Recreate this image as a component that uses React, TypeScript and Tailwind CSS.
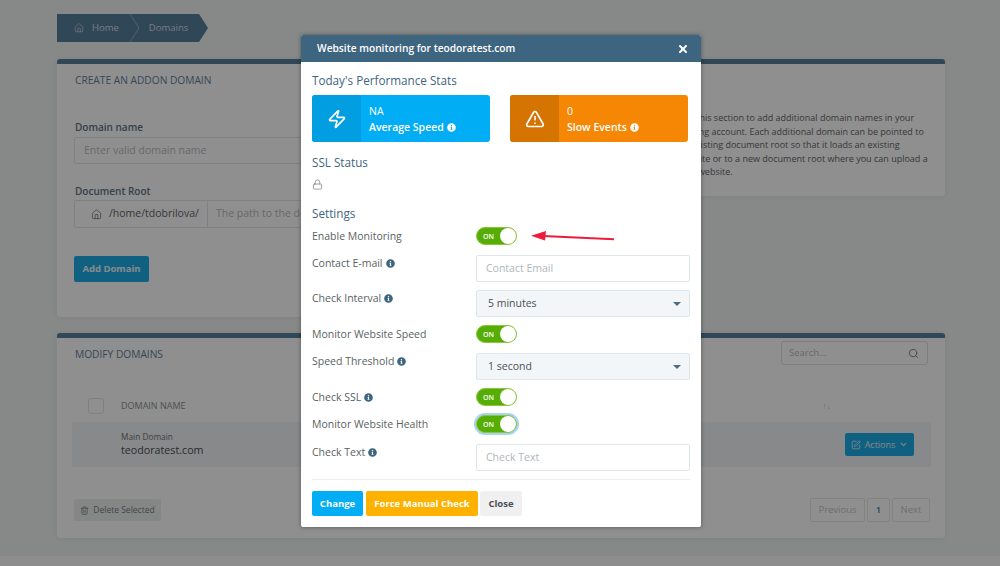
import { AlertTriangle, ChevronDown, House, Lock, Search, SquarePen, Trash2, X, Zap } from 'lucide-react';
import { FaInfoCircle } from 'react-icons/fa';
import type { ReactNode } from 'react';

function Tip({ light }: { light?: boolean }) {
  return (
    <FaInfoCircle
      size={9}
      className={`ml-[3px] inline-block align-[-0.5px] ${light ? 'text-white' : 'text-[#3e6580]'}`}
    />
  );
}

function Toggle({ focused }: { focused?: boolean }) {
  return (
    <div
      className={`flex h-[18px] w-[41px] items-center justify-between rounded-full border border-[#8cc63f] bg-[#56ad03] pl-[6px] ${focused ? 'ring-2 ring-[#a9d3f5]' : ''}`}
    >
      <span className="text-[7px] font-semibold leading-none text-white">ON</span>
      <span className="h-4 w-4 rounded-full bg-white" />
    </div>
  );
}

function TextField({ placeholder }: { placeholder: string }) {
  return (
    <div className="flex h-[27px] w-[214px] items-center rounded-[2px] border border-[#dfe6ec] bg-white px-[9px] pt-px text-[10.5px] text-[#b0b6bc]">
      {placeholder}
    </div>
  );
}

function SelectField({ value }: { value: string }) {
  return (
    <div className="flex h-[27px] w-[214px] items-center justify-between rounded-[2px] border border-[#dfe6ec] bg-[#f3f6f8] pl-[11px] pr-[8px] pt-px text-[10.5px] text-[#4a4f55]">
      {value}
      <span className="h-0 w-0 border-x-[4px] border-t-[4px] border-x-transparent border-t-[#4e6b80]" />
    </div>
  );
}

function Row({ label, tip, className, labelClass, children }: { label: string; tip?: boolean; className: string; labelClass?: string; children: ReactNode }) {
  return (
    <div className={`flex ${className}`}>
      <div className={`w-[164px] text-[10.5px] text-[#5b5f63] ${labelClass ?? 'leading-[18px]'}`}>
        {label}
        {tip && <Tip />}
      </div>
      {children}
    </div>
  );
}

function StatCard({ value, label, bg, iconBg, icon }: { value: string; label: string; bg: string; iconBg: string; icon: ReactNode }) {
  return (
    <div className={`flex h-[47px] w-[178px] overflow-hidden rounded-[3px] text-white ${bg}`}>
      <div className={`flex w-[49px] items-center justify-center ${iconBg}`}>{icon}</div>
      <div className="pl-[8px] pt-[8px] text-[10.5px] leading-4">
        <div>{value}</div>
        <div className="font-semibold">
          {label}
          <Tip light />
        </div>
      </div>
    </div>
  );
}

function Modal() {
  return (
    <div className="absolute left-[301px] top-[35px] h-[492px] w-[400px] overflow-hidden rounded-[2px] bg-white shadow-[0_0_4px_rgba(0,0,0,0.4)]">
      <div className="flex h-[27px] items-center justify-between bg-[#3e6580] pl-[16px] pr-[12px] text-[10.2px] font-semibold text-white">
        Website monitoring for teodoratest.com
        <X size={12} strokeWidth={4} />
      </div>
      <div className="px-[11px]">
        <div className="mt-[9px] text-[11.7px] font-medium leading-[18px] text-[#3e6580]">Today's Performance Stats</div>
        <div className="mt-[6px] flex w-[376px] justify-between">
          <StatCard
            value="NA"
            label="Average Speed"
            bg="bg-[#01adf5]"
            iconBg="bg-[#019fe1]"
            icon={<Zap size={20} strokeWidth={2} />}
          />
          <StatCard
            value="0"
            label="Slow Events"
            bg="bg-[#f58705]"
            iconBg="bg-[#d67402]"
            icon={<AlertTriangle size={20} strokeWidth={2} />}
          />
        </div>
        <div className="mt-[11px] text-[11.7px] font-medium leading-[18px] text-[#3e6580]">SSL Status</div>
        <Lock size={11} strokeWidth={1.5} className="mt-[8px] text-[#777]" />
        <div className="mt-[14px] text-[11.7px] font-medium leading-[18px] text-[#3e6580]">Settings</div>
        <Row label="Enable Monitoring" className="mt-[5px]">
          <Toggle />
        </Row>
        <Row label="Contact E-mail" tip labelClass="leading-4" className="mt-[10px]">
          <TextField placeholder="Contact Email" />
        </Row>
        <Row label="Check Interval" tip labelClass="leading-4" className="mt-[8px]">
          <SelectField value="5 minutes" />
        </Row>
        <Row label="Monitor Website Speed" className="mt-[8px]">
          <Toggle />
        </Row>
        <Row label="Speed Threshold" tip labelClass="leading-4" className="mt-[10px]">
          <SelectField value="1 second" />
        </Row>
        <Row label="Check SSL" tip className="mt-[8px]">
          <Toggle />
        </Row>
        <Row label="Monitor Website Health" className="mt-[9px]">
          <Toggle focused />
        </Row>
        <Row label="Check Text" tip labelClass="leading-4" className="mt-[11px]">
          <TextField placeholder="Check Text" />
        </Row>
        <div className="mt-[8px] h-px w-[378px] bg-[#eef0f2]" />
        <div className="mt-[11px] flex gap-[3px] text-[9.5px] font-bold">
          <div className="flex h-[25px] w-[51px] items-center justify-center rounded-[2px] bg-[#01adf5] pt-px text-white">Change</div>
          <div className="flex h-[25px] w-[112px] items-center justify-center rounded-[2px] bg-[#ffb100] pt-px text-white">Force Manual Check</div>
          <div className="ml-[-1px] flex h-[25px] w-[42px] items-center justify-center rounded-[2px] bg-[#f0f0f0] pt-px text-[#4a4f55]">Close</div>
        </div>
      </div>
    </div>
  );
}

function Breadcrumb() {
  return (
    <div className="flex h-[28px] w-[151px] items-center bg-[#567f9e] pl-[17px] text-[9.5px] text-[#d5dde3] [clip-path:polygon(0_0,142px_0,151px_50%,142px_100%,0_100%)]">
      <House size={10} strokeWidth={1.5} />
      <span className="ml-[8px]">Home</span>
      <svg width="10" height="28" viewBox="0 0 10 28" className="ml-[11px] text-[#9ab]" fill="none" stroke="currentColor">
        <path d="M0 0l9 14-9 14" />
      </svg>
      <span className="ml-[9px]">Domains</span>
    </div>
  );
}

export default function App() {
  return (
    <div className="relative h-[566px] w-[1000px] overflow-hidden bg-[#f1f3f3] font-['Open_Sans',sans-serif]">
      <div className="pl-[57px] pt-[14px]">
        <Breadcrumb />

        <div className="mt-[17px] flex w-[888px] items-start justify-between">
          <section className="h-[258px] w-[590px] overflow-hidden rounded-[3px] border-t-[5px] border-[#567f9e] bg-white px-[17px] pt-[8px] shadow-[0_0_6px_rgba(0,0,0,0.08)]">
            <h2 className="ml-px text-[10.2px] font-medium leading-[16px] text-[#5f7f9c]">CREATE AN ADDON DOMAIN</h2>
            <div className="ml-px mt-[31px] text-[10px] font-semibold leading-4 text-[#5f7488]">Domain name</div>
            <div className="mt-[2px] flex h-[27px] items-center rounded-[2px] border border-[#e2e6e8] pl-[9px] text-[10.5px] text-[#b8bcbf]">
              Enter valid domain name
            </div>
            <div className="ml-px mt-[19px] text-[10px] font-semibold leading-4 text-[#5f7488]">Document Root</div>
            <div className="mt-px flex h-[28px] items-center rounded-[2px] border border-[#e2e6e8] text-[10.5px]">
              <div className="flex h-full w-[133px] items-center border-r border-[#e2e6e8] pl-[16px] text-[#5f6468]">
                <House size={11} strokeWidth={1.5} />
                <span className="ml-[7px]">/home/tdobrilova/</span>
              </div>
              <span className="pl-[8px] text-[#b8bcbf]">The path to the document root</span>
            </div>
            <div className="mt-[28px] flex h-[26px] w-[75px] items-center justify-center rounded-[2px] bg-[#1eaee6] text-[9.5px] font-bold text-[#f0f6fa]">
              Add Domain
            </div>
          </section>

          <section className="h-[137px] w-[285px] overflow-hidden rounded-[3px] border-t-[5px] border-[#567f9e] bg-white pl-[18px] pr-[17px] pt-[47px] shadow-[0_0_6px_rgba(0,0,0,0.08)]">
            <p className="text-[9px] leading-[13.5px] text-[#636668]">
              Use this section to add additional domain names in your hosting account. Each additional domain can be pointed to an existing document root so that it loads an existing website or to a new document root where you can upload a new website.
            </p>
          </section>
        </div>

        <section className="mt-[16px] h-[205px] w-[888px] overflow-hidden rounded-[3px] border-t-[5px] border-[#567f9e] bg-white shadow-[0_0_6px_rgba(0,0,0,0.08)]">
          <div className="flex items-start justify-between px-[17px] pt-[3px]">
            <h2 className="ml-px mt-[5px] text-[10.2px] font-medium leading-[16px] text-[#5f7f9c]">MODIFY DOMAINS</h2>
            <div className="flex h-[24px] w-[147px] items-center justify-between rounded-[3px] border border-[#dde1e3] pl-[7px] pr-[8px] text-[9.5px] text-[#b8bcbf]">
              Search...
              <Search size={11} className="text-[#7a7e82]" />
            </div>
          </div>
          <div className="mt-[28px] flex h-[25px] items-center pl-[31px] text-[9px] text-[#8c9095]">
            <span className="h-4 w-4 rounded-[3px] border border-[#e0e3e5]" />
            <span className="ml-[17px]">DOMAIN NAME</span>
            <span className="ml-[637px] text-[8px] text-[#c4c8cb]">↑↓</span>
          </div>
          <div className="ml-[15px] mr-[14px] mt-[4px] flex h-[45px] items-center justify-between bg-[#f2f5f6] pl-[49px] pr-[17px]">
            <div>
              <div className="text-[8.3px] leading-[11px] text-[#70747a]">Main Domain</div>
              <div className="text-[10.7px] leading-[16px] text-[#4a4f55]">teodoratest.com</div>
            </div>
            <div className="flex h-[23px] w-[69px] items-center justify-center gap-[4px] rounded-[2px] bg-[#1eaee6] text-[9px] text-[#e4f0f6]">
              <SquarePen size={10} />
              Actions
              <ChevronDown size={9} strokeWidth={3} />
            </div>
          </div>
          <div className="mt-[31px] flex items-center justify-between pl-[17px] pr-[15px]">
            <div className="flex h-[22px] w-[87px] items-center justify-center gap-[4px] rounded-[2px] bg-[#eef0f1] text-[8.5px] text-[#7a7e82]">
              <Trash2 size={9} />
              Delete Selected
            </div>
            <div className="flex gap-[2px] text-[9.5px] text-[#c4c8cb]">
              <div className="flex h-[24px] w-[55px] items-center justify-center rounded-[2px] border border-[#e6e9ea]">Previous</div>
              <div className="flex h-[24px] w-[23px] items-center justify-center rounded-[2px] border border-[#e6e9ea] font-semibold text-[#567f9e]">1</div>
              <div className="flex h-[24px] w-[38px] items-center justify-center rounded-[2px] border border-[#e6e9ea]">Next</div>
            </div>
          </div>
        </section>
      </div>

      <div className="mt-[17px] h-[11px] border-t border-[#f0f0f0] bg-[#fbfbfb]" />

      <div className="absolute inset-0 bg-black/44" />
      <Modal />
      <svg className="absolute left-[528px] top-[229px]" width="90" height="14" viewBox="0 0 90 14" fill="none">
        <path d="M86 10.3 L15 7" stroke="#ed1c3a" strokeWidth="2" />
        <path d="M3 6.7 L18 2 L17 11.5 Z" fill="#ed1c3a" />
      </svg>
    </div>
  );
}
